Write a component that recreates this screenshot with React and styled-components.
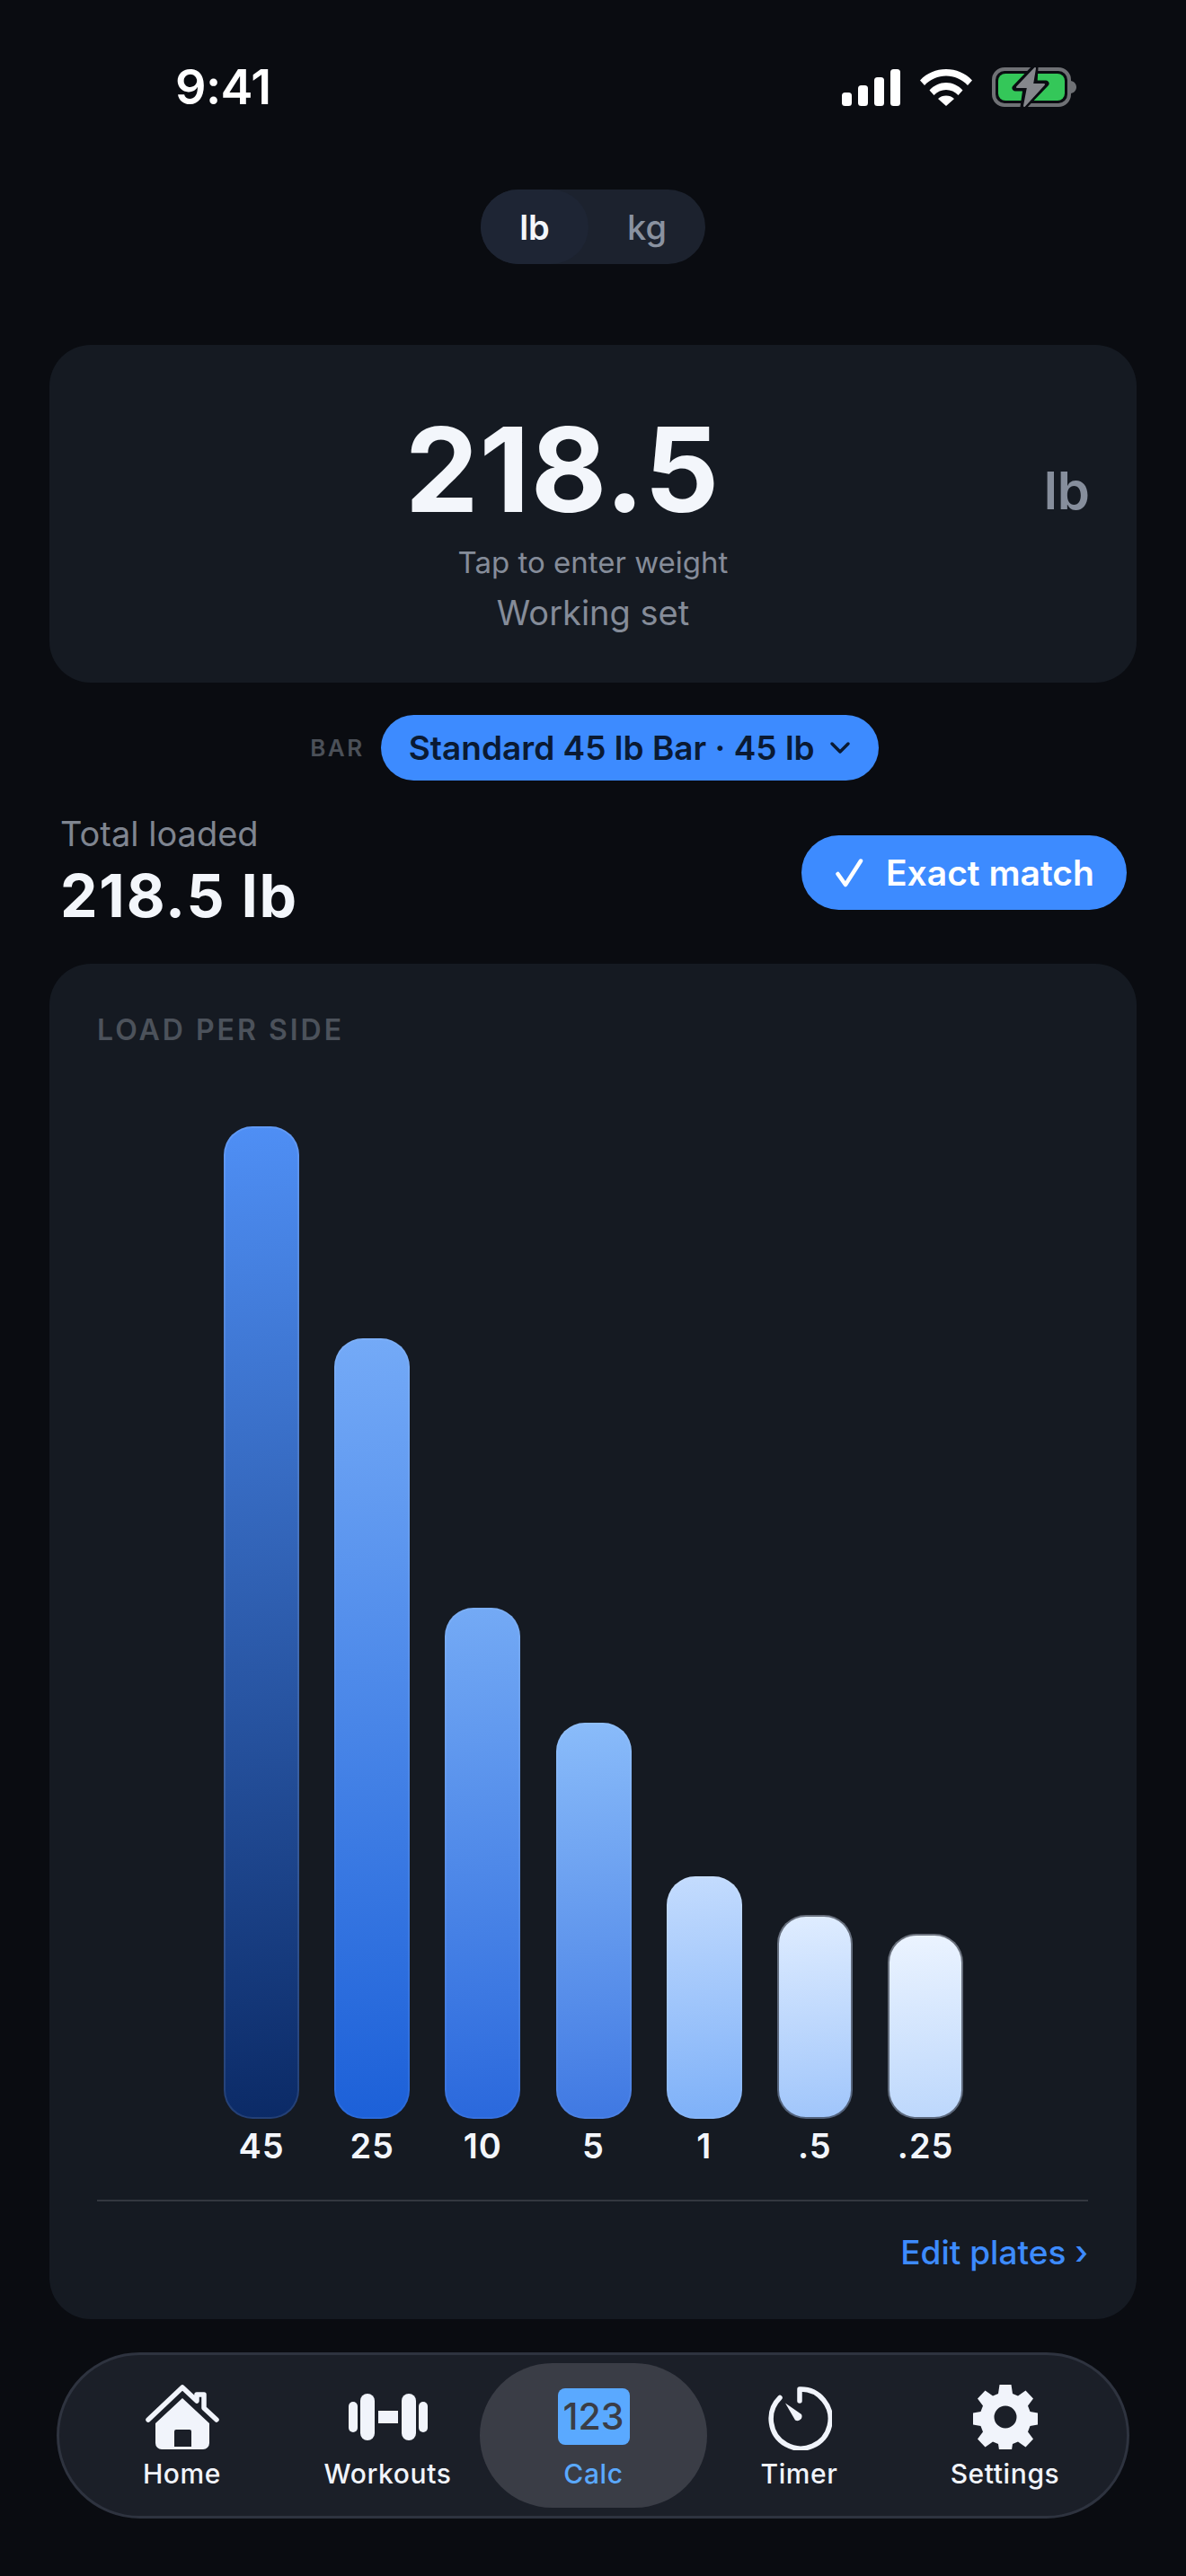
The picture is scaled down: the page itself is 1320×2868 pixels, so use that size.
import React from 'react'
import styled, { createGlobalStyle } from 'styled-components'

const GlobalStyle = createGlobalStyle`
  html, body { margin: 0; padding: 0; background: #0a0c11; }
  body { font-family: Inter, "Liberation Sans", sans-serif; color: #f3f6fb; }
  * { box-sizing: border-box; }
`

const Screen = styled.div`
  width: 1320px;
  height: 2868px;
  background: #0a0c11;
  display: flex;
  flex-direction: column;
  overflow: hidden;
`

const StatusBar = styled.div`
  height: 130px;
  padding: 63px 122px 0 195px;
  display: flex;
  justify-content: space-between;
  align-items: flex-start;
`

const Clock = styled.div`
  font-size: 54px;
  line-height: 68px;
  font-weight: 600;
  color: #fff;
  letter-spacing: -0.6px;
`

const StatusIcons = styled.div`
  display: flex;
  align-items: center;
  gap: 22px;
  height: 68px;
`

const Segmented = styled.div`
  align-self: center;
  margin-top: 81px;
  width: 250px;
  height: 83px;
  border-radius: 42px;
  background: #1c222e;
  display: flex;
`

const Segment = styled.div`
  width: ${p => (p.$active ? 120 : 130)}px;
  border-radius: 42px;
  display: flex;
  align-items: center;
  justify-content: center;
  font-size: 38px;
  font-weight: ${p => (p.$active ? 600 : 500)};
  color: ${p => (p.$active ? '#f3f6fb' : '#8a92a0')};
  background: ${p => (p.$active ? '#1e2534' : 'transparent')};
`

const WeightCard = styled.div`
  position: relative;
  margin: 90px 55px 0;
  height: 376px;
  border-radius: 46px;
  background: #151a22;
  display: flex;
  flex-direction: column;
  align-items: center;
  padding-top: 58px;
`

const WeightValue = styled.div`
  margin-right: 68px;
  font-size: 130px;
  line-height: 162px;
  font-weight: 700;
  letter-spacing: 1px;
  color: #f3f6fb;
`

const WeightUnit = styled.div`
  position: absolute;
  right: 52px;
  top: 127px;
  font-size: 58px;
  line-height: 70px;
  font-weight: 600;
  color: #868e9c;
`

const Hint = styled.div`
  margin-top: 2px;
  font-size: 33px;
  line-height: 40px;
  color: #858c99;
`

const SetLabel = styled.div`
  margin-top: 13px;
  font-size: 38px;
  line-height: 46px;
  color: #858c99;
`

const BarRow = styled.div`
  margin-top: 36px;
  padding-left: 3px;
  display: flex;
  align-items: center;
  justify-content: center;
  gap: 18px;
`

const BarLabel = styled.div`
  font-size: 26px;
  font-weight: 600;
  letter-spacing: 2.5px;
  color: #4b5058;
`

const BarPill = styled.div`
  height: 73px;
  width: 554px;
  border-radius: 37px;
  background: #3d8bff;
  color: #0a1a33;
  display: flex;
  align-items: center;
  gap: 16px;
  padding-left: 31px;
  font-size: 37px;
  font-weight: 600;
`

const TotalRow = styled.div`
  margin-top: 36px;
  padding: 0 66px 0 67px;
  display: flex;
  justify-content: space-between;
  align-items: center;
`

const TotalLabel = styled.div`
  font-size: 38px;
  line-height: 46px;
  color: #7f8590;
`

const TotalValue = styled.div`
  margin-top: 7px;
  font-size: 66px;
  line-height: 78px;
  font-weight: 700;
  letter-spacing: 1.8px;
  color: #f3f6fb;
`

const MatchPill = styled.div`
  margin-top: 2px;
  height: 83px;
  width: 362px;
  border-radius: 42px;
  background: #3d8bff;
  color: #fff;
  display: flex;
  align-items: center;
  gap: 24px;
  padding-left: 38px;
  font-size: 39px;
  font-weight: 600;
`

const LoadCard = styled.div`
  margin: 37px 55px 0;
  height: 1509px;
  border-radius: 46px;
  background: #151a22;
  padding: 55px 54px 0 53px;
  display: flex;
  flex-direction: column;
`

const LoadTitle = styled.div`
  font-size: 32px;
  line-height: 38px;
  font-weight: 600;
  letter-spacing: 3px;
  color: #4c525b;
`

const Chart = styled.div`
  height: 1157px;
  margin-top: 88px;
  padding-left: 141px;
  display: flex;
  gap: 39.2px;
  align-items: flex-end;
`

const Column = styled.div`
  width: 84px;
  display: flex;
  flex-direction: column;
  align-items: center;
`

const Plate = styled.div`
  width: 100%;
  height: ${p => p.$h}px;
  border-radius: 32px;
  background: linear-gradient(175deg, ${p => p.$from}, ${p => p.$to}) border-box;
  border: 2px solid ${p => p.$edge};
`

const PlateLabel = styled.div`
  margin-top: 8px;
  height: 44px;
  font-size: 38px;
  line-height: 44px;
  font-weight: 600;
  letter-spacing: 1px;
  color: #f3f6fb;
  white-space: nowrap;
`

const Divider = styled.div`
  margin-top: 38px;
  height: 2px;
  background: #33373f;
`

const EditLink = styled.div`
  margin-top: 35px;
  text-align: right;
  font-size: 37px;
  line-height: 44px;
  font-weight: 500;
  color: #3d8bff;
`

const TabBar = styled.div`
  margin: 37px 63px 0;
  height: 185px;
  border-radius: 93px;
  background: #1b1f28;
  border: 3px solid #2e333f;
  padding: 0 22px;
  display: grid;
  grid-template-columns: repeat(5, 229px);
  align-items: center;
`

const Tab = styled.div`
  height: 161px;
  margin: ${p => (p.$active ? '0 -12px' : '0')};
  border-radius: 81px;
  background: ${p => (p.$active ? '#3a3d46' : 'transparent')};
  color: ${p => (p.$active ? '#5aa9ff' : '#f1f4fb')};
  display: flex;
  flex-direction: column;
  align-items: center;
`

const TabIcon = styled.div`
  height: 81px;
  margin-top: 24px;
  padding-top: ${p => p.$pad || 0}px;
  display: flex;
  align-items: flex-start;
  justify-content: center;
`

const TabLabel = styled.div`
  font-size: 30px;
  line-height: 36px;
  font-weight: 500;
  letter-spacing: 0.6px;
`

const CalcTile = styled.div`
  width: 80px;
  height: 63px;
  border-radius: 8px;
  background: #5aa9ff;
  color: #3a3d46;
  font-size: 41px;
  line-height: 63px;
  font-weight: 500;
  text-align: center;
`

const SignalIcon = () => (
  <svg width="65" height="41" viewBox="0 0 65 41" fill="#fff">
    <rect x="0" y="26" width="11" height="15" rx="3.5" />
    <rect x="18" y="18" width="11" height="23" rx="3.5" />
    <rect x="36" y="9" width="11" height="32" rx="3.5" />
    <rect x="54" y="0" width="11" height="41" rx="3.5" />
  </svg>
)

const WifiIcon = () => (
  <svg width="58" height="42" viewBox="0 0 58 42" fill="#fff">
    <path d="M0 13.500C7.500 5.200 18 1 29 1s21.500 4.200 29 12.500l-5 5.500C46.500 12.200 38 8.500 29 8.500S11.500 12.200 5 19z" />
    <path d="M10.500 24.500C15.500 19 22 16 29 16s13.500 3 18.500 8.500l-5 5.500C39 26 34 24 29 24s-10 2-13.500 6z" />
    <path d="M20 34c2.500-2.500 5.500-3.500 9-3.500s6.500 1 9 3.500l-9 8z" />
  </svg>
)

const BatteryIcon = () => (
  <svg width="94" height="46" viewBox="0 0 94 46">
    <rect x="2" y="3" width="84" height="40" rx="12" fill="none" stroke="#6f7175" strokeWidth="4" />
    <rect x="7" y="8" width="74" height="30" rx="8" fill="#34c759" />
    <path d="M88 16c4 1 6 4 6 7s-2 6-6 7z" fill="#6f7175" />
    <path d="M48 1 L26 24 L38 24 L35 45 L60 19 L47 19 Z" fill="#0a0c11" stroke="#0a0c11" strokeWidth="7" strokeLinejoin="round" />
    <path d="M48 2 L28 23 L40 23 L36 44 L58 20 L45 20 Z" fill="#85878c" stroke="#85878c" strokeWidth="2" strokeLinejoin="round" />
  </svg>
)

const Chevron = () => (
  <svg width="24" height="15" viewBox="0 0 24 15" fill="none" stroke="#0a1a33" strokeWidth="3.5" strokeLinecap="round" strokeLinejoin="round">
    <path d="M3 3l9 9 9-9" />
  </svg>
)

const Check = () => (
  <svg width="32" height="32" viewBox="0 0 32 32" fill="none" stroke="#fff" strokeWidth="4.500" strokeLinecap="round" strokeLinejoin="round">
    <path d="M2.500 17 11 29 28 2.500" />
  </svg>
)

const HomeIcon = () => (
  <svg width="82" height="72" viewBox="0 0 82 72" fill="#f1f4fb">
    <path d="M3 39 41 3l16 15V11h8v15l14 13" fill="none" stroke="#f1f4fb" strokeWidth="5.500" strokeLinecap="round" strokeLinejoin="round" />
    <path fillRule="evenodd" d="M41 15 71 43v22a7 7 0 0 1-7 7H18a7 7 0 0 1-7-7V43zM32 52v17h19V52a2 2 0 0 0-2-2H34a2 2 0 0 0-2 2z" />
  </svg>
)

const DumbbellIcon = () => (
  <svg width="88" height="52" viewBox="0 0 88 52" fill="#f1f4fb">
    <rect x="0" y="9" width="10" height="34" rx="5" />
    <rect x="13" y="0" width="16" height="52" rx="8" />
    <rect x="33" y="19" width="22" height="14" />
    <rect x="59" y="0" width="16" height="52" rx="8" />
    <rect x="78" y="9" width="10" height="34" rx="5" />
  </svg>
)

const TimerIcon = () => (
  <svg width="72" height="72" viewBox="0 0 72 72" fill="none">
    <path d="M14 13.500a33 33 0 1 0 22-9.500v13" stroke="#f1f4fb" strokeWidth="5.500" strokeLinecap="round" strokeLinejoin="round" />
    <path d="M20 19.500 38 32a5 5 0 0 1-7 6.500z" fill="#f1f4fb" />
  </svg>
)

const GearIcon = () => (
  <svg width="72" height="72" viewBox="0 0 72 72" fill="#f1f4fb">
    <path
      fillRule="evenodd"
      d="M29.500 0h13l1.500 10 6 2.500 8.500-6 8.500 9-6 8 2.500 6.500 9 1.500v13l-9 1.500-2.500 6.500 6 8-8.500 9-8.500-6-6 2.500-1.500 10h-13l-1.500-10-6-2.500-8.500 6-8.500-9 6-8-2.500-6.500-9-1.500v-13l9-1.500 2.500-6.500-6-8 8.500-9 8.500 6 6-2.500zM36 23.500a12.500 12.500 0 1 0 0 25 12.500 12.500 0 0 0 0-25z"
    />
  </svg>
)

const plates = [
  { label: '45', h: 1105, from: '#4f8ff5', to: '#0b2a66', edge: 'rgba(255,255,255,0.1)' },
  { label: '25', h: 869, from: '#74aaf7', to: '#1c60d8', edge: 'rgba(255,255,255,0.06)' },
  { label: '10', h: 569, from: '#74aaf5', to: '#2a68dc', edge: 'rgba(255,255,255,0.06)' },
  { label: '5', h: 441, from: '#8abcfa', to: '#3f78e2', edge: 'rgba(255,255,255,0.06)' },
  { label: '1', h: 270, from: '#c4dcfe', to: '#7db0f8', edge: 'rgba(255,255,255,0.06)' },
  { label: '.5', h: 227, from: '#e0edff', to: '#9fc5fb', edge: 'rgba(40,44,56,0.65)' },
  { label: '.25', h: 206, from: '#ecf4ff', to: '#bcd7fc', edge: 'rgba(40,44,56,0.65)' },
]

const tabs = [
  { label: 'Home', icon: <HomeIcon /> },
  { label: 'Workouts', icon: <DumbbellIcon />, pad: 10 },
  { label: 'Calc', icon: <CalcTile>123</CalcTile>, pad: 4 },
  { label: 'Timer', icon: <TimerIcon />, pad: 1 },
  { label: 'Settings', icon: <GearIcon /> },
]

function App() {
  return (
    <Screen>
      <GlobalStyle />
      <StatusBar>
        <Clock>9:41</Clock>
        <StatusIcons>
          <SignalIcon />
          <WifiIcon />
          <BatteryIcon />
        </StatusIcons>
      </StatusBar>

      <Segmented>
        <Segment $active>lb</Segment>
        <Segment>kg</Segment>
      </Segmented>

      <WeightCard>
        <WeightValue>218.5</WeightValue>
        <WeightUnit>lb</WeightUnit>
        <Hint>Tap to enter weight</Hint>
        <SetLabel>Working set</SetLabel>
      </WeightCard>

      <BarRow>
        <BarLabel>BAR</BarLabel>
        <BarPill>
          Standard 45 lb Bar · 45 lb
          <Chevron />
        </BarPill>
      </BarRow>

      <TotalRow>
        <div>
          <TotalLabel>Total loaded</TotalLabel>
          <TotalValue>218.5 lb</TotalValue>
        </div>
        <MatchPill>
          <Check />
          Exact match
        </MatchPill>
      </TotalRow>

      <LoadCard>
        <LoadTitle>LOAD PER SIDE</LoadTitle>
        <Chart>
          {plates.map(p => (
            <Column key={p.label}>
              <Plate $h={p.h} $from={p.from} $to={p.to} $edge={p.edge} />
              <PlateLabel>{p.label}</PlateLabel>
            </Column>
          ))}
        </Chart>
        <Divider />
        <EditLink>Edit plates ›</EditLink>
      </LoadCard>

      <TabBar>
        {tabs.map(t => (
          <Tab key={t.label} $active={t.label === 'Calc'}>
            <TabIcon $pad={t.pad}>{t.icon}</TabIcon>
            <TabLabel>{t.label}</TabLabel>
          </Tab>
        ))}
      </TabBar>
    </Screen>
  )
}

export default App
